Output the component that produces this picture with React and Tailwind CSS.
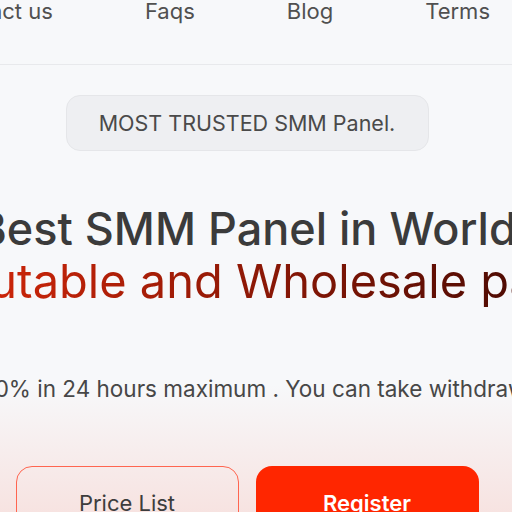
const navItems = [ 'Services', 'Contact us', 'Faqs', 'Blog', 'Terms' ];

const App = () => {
	return (
		<div className="w-[512px] h-[512px] overflow-hidden bg-[#f7f8fa] font-['Inter',sans-serif]">
			{ /* Top nav, scrolled partly out of view */ }
			<div className="h-[65px] border-b border-[#e8e9ec] flex justify-end pr-[22px] gap-[92px] whitespace-nowrap">
				{ navItems.map( ( item ) => (
					<span key={ item } className="text-[22px] leading-[22px] text-[#505050]">
						{ item }
					</span>
				) ) }
			</div>

			{ /* Hero */ }
			<div className="h-[447px] bg-[linear-gradient(180deg,#f7f8fa_0px,#f7f8fa_320px,#f7e3e1_447px)]">
				<div className="w-[1280px] -ml-[393px] flex flex-col items-center">
					<div className="mt-[30px] w-[363px] h-[56px] rounded-[14px] bg-[#eeeff2] border border-[#e5e6e9] flex items-center justify-center">
						<span className="text-[21.5px] text-[#4a4a4a]">MOST TRUSTED SMM Panel.</span>
					</div>

					<h1 className="mt-[52px] text-[45px] leading-[52px] font-medium text-[#3b3b3b] whitespace-nowrap">
						Best SMM Panel in World
					</h1>
					<h2 className="pl-[12px] text-[47px] leading-[52px] font-normal whitespace-nowrap bg-[linear-gradient(90deg,#e42a0a,#3a0702)] bg-clip-text text-transparent">
						Reputable and Wholesale panel
					</h2>

					<p className="mt-[68px] text-[22.5px] leading-[28px] text-[#474747] whitespace-nowrap">
						We deliver 100% in 24 hours maximum . You can take withdrawal any time
					</p>

					<div className="mt-[63px] flex gap-[17px]">
						<button className="w-[223px] h-[74px] rounded-[16px] border-[1.5px] border-[#ff6550] text-[22px] text-[#3d3d3d]">
							Price List
						</button>
						<button className="w-[223px] h-[74px] rounded-[16px] bg-[#ff2600] text-[22px] font-semibold text-white">
							Register
						</button>
					</div>
				</div>
			</div>
		</div>
	);
};

export default App;
